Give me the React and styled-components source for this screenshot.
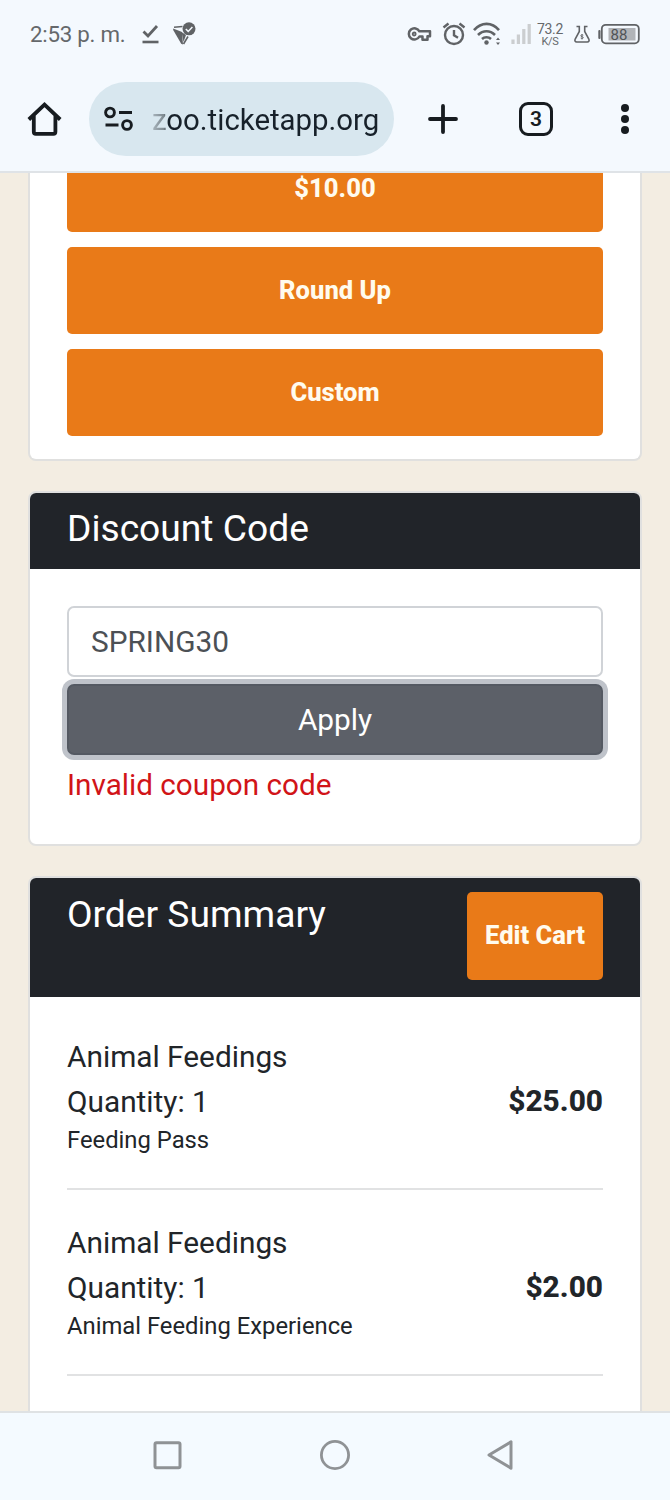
import React from 'react';
import styled, { createGlobalStyle } from 'styled-components';

const GlobalStyle = createGlobalStyle`
    * {
        box-sizing: border-box;
    }
    body {
        margin: 0;
        font-family: Roboto, "Liberation Sans", sans-serif;
        color: #212529;
    }
    button, input {
        font-family: inherit;
    }
`
const Phone = styled.div`
    display: flex;
    flex-direction: column;
    width: 670px;
    height: 1500px;
    overflow: hidden;
    background: #f4f9fe;
`
const StatusBar = styled.div`
    flex: none;
    display: flex;
    align-items: center;
    justify-content: space-between;
    height: 68px;
    padding: 0 30px 0 30px;
    color: #65686b;
`
const StatusGroup = styled.div`
    display: flex;
    align-items: center;
`
const Clock = styled.span`
    width: 110px;
    font-size: 22.3px;
    line-height: 30px;
    letter-spacing: -0.25px;
    white-space: nowrap;
`
const Speed = styled.div`
    display: flex;
    flex-direction: column;
    align-items: center;
    width: 28px;
    height: 25px;
    margin: 0 10px 0 5px;
    font-size: 14px;
    line-height: 14px;
    letter-spacing: -0.3px;
    small {
        font-size: 11px;
        line-height: 11px;
    }
`
const Icon = styled.svg`
    flex: none;
    display: block;
    overflow: visible;
    margin-left: ${props => props.$gap || 0}px;
`
const Toolbar = styled.div`
    flex: none;
    display: flex;
    align-items: center;
    height: 105px;
    padding: 0 0 2px 27px;
    border-bottom: 2px solid #dfe3e7;
`
const AddressBar = styled.div`
    display: flex;
    align-items: center;
    width: 305px;
    height: 74px;
    margin-left: 26px;
    padding-left: 15px;
    border-radius: 37px;
    background: #d8e7ef;
`
const Url = styled.span`
    margin-left: 18px;
    padding-top: 2px;
    font-size: 29.4px;
    line-height: 40px;
    white-space: nowrap;
    background: linear-gradient(90deg, #a9b5bd 0, #7d8990 12px, #17212a 16px);
    background-clip: text;
    color: transparent;
`
const TabCount = styled.div`
    display: flex;
    align-items: center;
    justify-content: center;
    width: 34px;
    height: 34px;
    margin-left: 61px;
    border: 3.6px solid #171c20;
    border-radius: 9px;
    color: #171c20;
    font-size: 21px;
    font-weight: 600;
    line-height: 26px;
`
const Page = styled.main`
    flex: 1;
    min-height: 0;
    display: flex;
    flex-direction: column;
    align-items: center;
    gap: 30px;
    overflow: hidden;
    background: #f3ede2;
`
const Card = styled.section`
    flex: none;
    width: 614px;
    border: 2px solid #e0e0df;
    border-top-width: ${props => props.$cut ? 0 : '2px'};
    border-radius: ${props => props.$cut ? '0 0 8px 8px' : '8px'};
    background: #fff;
    overflow: hidden;
`
const CardHeader = styled.header`
    display: flex;
    justify-content: space-between;
    height: ${props => props.$tall ? 119 : 76}px;
    padding: ${props => props.$tall ? 14 : 13}px 37px 0;
    background: #212429;
`
const Title = styled.h2`
    margin: 0;
    color: #fff;
    font-size: 37.2px;
    font-weight: 400;
    line-height: 45px;
`
const Donations = styled.div`
    display: flex;
    flex-direction: column;
    gap: 15px;
    height: 286px;
    padding: 0 37px 23px;
    justify-content: flex-end;
`
const OrangeButton = styled.button`
    flex: none;
    width: ${props => props.$small ? '136px' : '100%'};
    height: ${props => props.$small ? 88 : 87}px;
    padding: 0 0 2px;
    border: 0;
    border-radius: 5px;
    background: #e97a18;
    color: #fffbee;
    font-size: 25.6px;
    font-weight: 800;
    line-height: 38px;
`
const Discount = styled.form`
    display: flex;
    flex-direction: column;
    padding: 37px;
`
const CodeInput = styled.input`
    height: 71px;
    padding: 0 22px;
    border: 2px solid #d0d3d7;
    border-radius: 7px;
    outline: 0;
    background: #fff;
    color: #4c5055;
    font-size: 29.8px;
`
const ApplyButton = styled.button`
    height: 71px;
    margin-top: 7px;
    border: 2px solid #545962;
    border-radius: 7px;
    background: #5c6068;
    box-shadow: 0 0 0 5px #bfc3ca;
    color: #fff;
    font-size: 29.8px;
`
const ErrorText = styled.div`
    margin-top: 7px;
    color: #d11418;
    font-size: 29.7px;
    line-height: 45px;
`
const Items = styled.div`
    padding: 7px 37px 0;
`
const Item = styled.div`
    display: flex;
    align-items: center;
    justify-content: space-between;
    height: 186px;
    border-bottom: 2px solid #e1e2e3;
    font-size: 29.8px;
    line-height: 44.7px;
    small {
        display: block;
        margin-top: -1.5px;
        font-size: 23.8px;
        line-height: 34px;
    }
`
const Price = styled.strong`
    font-weight: 800;
    padding-top: 10px;
`
const NavBar = styled.nav`
    flex: none;
    display: flex;
    justify-content: space-between;
    height: 89px;
    padding: 26px 153px 0;
    border-top: 2px solid #dfe2e4;
    background: #f4faff;
`

const items = [
    { name: 'Animal Feedings', quantity: 1, detail: 'Feeding Pass', price: '$25.00' },
    { name: 'Animal Feedings', quantity: 1, detail: 'Animal Feeding Experience', price: '$2.00' },
]

const Status = () => (
    <StatusBar>
        <StatusGroup>
            <Clock>2:53 p. m.</Clock>
            <Icon $gap={2} width="17" height="20" viewBox="0 0 17 20" fill="none" stroke="#606366">
                <path d="M1.5 7.5 6 12 15 2" strokeWidth="2.8" />
                <path d="M.5 18h16" strokeWidth="2.6" />
            </Icon>
            <Icon $gap={14} width="24" height="24" viewBox="0 0 24 24">
                <path d="M.2 6.500 9 10l1 12.500-1.800-.8L.2 8Z" fill="#606366" />
                <path d="M1 5.200 9.500 4.500M10.500 22l4.500-7.500" stroke="#606366" strokeWidth="1.600" />
                <path d="m8.500 10 4.500 3-2.500 7Z" fill="#606366" />
                <circle cx="16" cy="6.800" r="6.500" fill="#606366" />
                <path d="m12.800 7 2.400 2.400 4.200-4.400" fill="none" stroke="#f4f9fe" strokeWidth="1.500" />
            </Icon>
        </StatusGroup>
        <StatusGroup>
            <Icon width="25" height="16" viewBox="0 0 25 16" fill="none" stroke="#606366" strokeWidth="2.5">
                <path d="M12.4 5.3H23v5h-2.5v3.5h-5v-3.300h-3.100a5.600 5.600 0 1 1 0-5.200Z" strokeLinejoin="round" />
                <circle cx="7.2" cy="8" r="1.5" strokeWidth="1.8" />
            </Icon>
            <Icon $gap={10} width="24" height="24" viewBox="0 0 24 24" fill="none" stroke="#606366" strokeWidth="2.4">
                <circle cx="12" cy="13" r="9" />
                <path d="M12 8v5.400l4 2.400M1.500 5.500l5-4M22.500 5.500l-5-4" />
            </Icon>
            <Icon $gap={7} width="29" height="24" viewBox="0 0 29 24" fill="none" stroke="#606366" strokeWidth="2.6">
                <path d="M1 8.200C8.300-.2 19-.2 26 8.200M5 13c5-5 12-5 17 0M9 17c2.500-2.300 6.500-2.300 9 0" />
                <circle cx="13.500" cy="20.500" r="2.200" fill="#606366" stroke="none" />
                <path d="m23 18 2-2.500 2 2.500Zm0 2.500 2 2.500 2-2.500Z" fill="#606366" stroke="none" />
            </Icon>
            <Icon $gap={9} width="20" height="20" viewBox="0 0 20 20" stroke="#cbced0" strokeWidth="3.2">
                <path d="M2 20v-4.500M7.400 20v-9.500M12.800 20V5M18.200 20V0" />
            </Icon>
            <Speed>73.2<small>K/S</small></Speed>
            <Icon width="16" height="18" viewBox="0 0 16 18" fill="none" stroke="#606366" strokeWidth="1.600">
                <path d="M2.500 1.500h2.800v5L1.200 14c-.8 1.600 0 3 1.500 3h10.600c1.500 0 2.300-1.400 1.500-3l-4.100-7.500v-5h2.800" />
                <path d="M9.300 10.200c-1.200-.7-2.600-.2-2.600.6 0 1.200 2.600.6 2.600 1.800 0 .9-1.500 1.200-2.600.5M8 9v5.500" strokeWidth=".9" />
            </Icon>
            <Icon $gap={8} width="42" height="22" viewBox="0 0 42 22">
                <rect x=".3" y="7" width="2.200" height="9" rx="1" fill="#606366" />
                <rect x="3.800" y="1.800" width="37" height="18.500" rx="4" fill="none" stroke="#606366" strokeWidth="1.800" />
                <rect x="10.500" y="5" width="27" height="12.500" fill="#b1b4b8" />
                <text x="12.500" y="16.500" fontSize="15" fill="#505356">88</text>
            </Icon>
        </StatusGroup>
    </StatusBar>
)

const BrowserBar = () => (
    <Toolbar>
        <Icon width="36" height="36" viewBox="0 0 36 36" fill="none" stroke="#171c20" strokeWidth="3.800">
            <path d="M1.800 18.500 17.500 3.700l15.700 14.800M6.800 14.500v16.300q0 2 2 2h17.600q2 0 2-2V14.500" />
        </Icon>
        <AddressBar>
            <Icon width="30" height="26" viewBox="0 0 30 26" fill="none" stroke="#171c20" strokeWidth="2.900">
                <circle cx="6" cy="6.500" r="4.400" />
                <circle cx="23" cy="19" r="4.400" />
                <path d="M15 6.500h13M1.500 19h13" />
            </Icon>
            <Url>zoo.ticketapp.org</Url>
        </AddressBar>
        <Icon $gap={34} width="30" height="30" viewBox="0 0 30 30" stroke="#171c20" strokeWidth="3.800" strokeLinecap="round">
            <path d="M2 15h26M15 2v26" />
        </Icon>
        <TabCount>3</TabCount>
        <Icon $gap={68} width="8" height="30" viewBox="0 0 8 30" fill="#171c20">
            <circle cx="4" cy="4" r="4" />
            <circle cx="4" cy="15" r="4" />
            <circle cx="4" cy="26" r="4" />
        </Icon>
    </Toolbar>
)

const App = () => {
    return (
        <Phone>
            <GlobalStyle />
            <Status />
            <BrowserBar />
            <Page>
                <Card $cut>
                    <Donations>
                        <OrangeButton>$10.00</OrangeButton>
                        <OrangeButton>Round Up</OrangeButton>
                        <OrangeButton>Custom</OrangeButton>
                    </Donations>
                </Card>
                <Card>
                    <CardHeader>
                        <Title>Discount Code</Title>
                    </CardHeader>
                    <Discount>
                        <CodeInput defaultValue="SPRING30" />
                        <ApplyButton type="button">Apply</ApplyButton>
                        <ErrorText>Invalid coupon code</ErrorText>
                    </Discount>
                </Card>
                <Card>
                    <CardHeader $tall>
                        <Title>Order Summary</Title>
                        <OrangeButton $small>Edit Cart</OrangeButton>
                    </CardHeader>
                    <Items>
                        {items.map(item => (
                            <Item key={item.detail}>
                                <div>
                                    {item.name}<br />
                                    Quantity: {item.quantity}
                                    <small>{item.detail}</small>
                                </div>
                                <Price>{item.price}</Price>
                            </Item>
                        ))}
                        <Item />
                    </Items>
                </Card>
            </Page>
            <NavBar>
                <Icon width="28" height="32" viewBox="0 0 28 32" fill="none" stroke="#8f9295" strokeWidth="3">
                    <rect x="2" y="3.700" width="25" height="25" rx="1.500" />
                </Icon>
                <Icon width="32" height="32" viewBox="-2 0 32 32" fill="none" stroke="#8f9295" strokeWidth="2.800">
                    <circle cx="16" cy="16" r="13.600" />
                </Icon>
                <Icon width="32" height="32" viewBox="0 0 32 32" fill="none" stroke="#8f9295" strokeWidth="3" strokeLinejoin="round">
                    <path d="M4 16 26 2.800v26.400Z" />
                </Icon>
            </NavBar>
        </Phone>
    )
}
export default App;
